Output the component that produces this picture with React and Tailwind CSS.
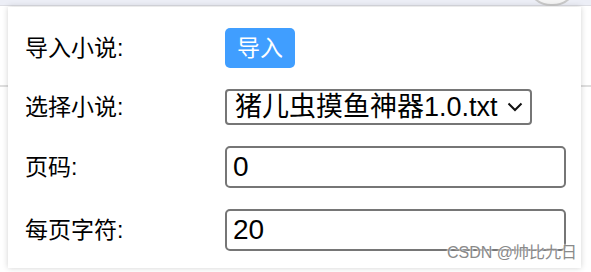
import React from 'react'

const font = { fontFamily: '"Liberation Sans", "Noto Sans CJK SC", sans-serif' }

function Row({ label, children }) {
  return (
    <div className="flex items-center">
      <div className="w-[200px] text-[23px] leading-[28px] text-black">{label}</div>
      {children}
    </div>
  )
}

export default function App() {
  return (
    <div className="relative w-[591px] h-[272px] bg-white overflow-hidden" style={font}>
      {/* browser chrome behind the popup */}
      <div className="h-[6px] bg-[#eceef6] border-b border-[#dcdde3]"></div>
      <div className="absolute left-0 right-0 top-[85px] h-[2px] bg-[#dedede]"></div>
      <div className="absolute left-[526px] top-[-44px] w-[52px] h-[50px] rounded-full bg-[#f4f4f4] border-2 border-[#c9c9c9]"></div>

      <div className="relative ml-[8px] mt-[1px] w-[573px] h-[261px] bg-white shadow-[0_0_6px_rgba(0,0,0,0.18)] pl-[17px] pt-[21px]">
        <div className="flex flex-col gap-[21px]">
          <Row label="导入小说:">
            <button className="w-[70px] h-[40px] rounded-[5px] bg-[#409eff] text-white text-[23px] leading-[28px]">导入</button>
          </Row>
          <Row label="选择小说:">
            <div className="relative w-[307px] h-[36px]">
              <select className="appearance-none w-full h-full border-2 border-[#767676] rounded-[4px] pl-[8px] text-[27px] leading-[30px] text-black bg-white outline-none" style={font}>
                <option>猪儿虫摸鱼神器1.0.txt</option>
              </select>
              <svg className="absolute right-[9px] top-[13px] pointer-events-none" width="16" height="10" viewBox="0 0 16 10">
                <path d="M1.5 1.5 L8 8 L14.5 1.5" fill="none" stroke="#111" strokeWidth="2" />
              </svg>
            </div>
          </Row>
          <Row label="页码:">
            <input defaultValue="0" className="w-[341px] h-[42px] border-2 border-[#767676] rounded-[5px] px-[6px] text-[28px] text-black outline-none" style={font} />
          </Row>
          <Row label="每页字符:">
            <input defaultValue="20" className="w-[341px] h-[42px] border-2 border-[#767676] rounded-[5px] px-[6px] text-[28px] text-black outline-none" style={font} />
          </Row>
        </div>
      </div>

      <div className="absolute right-[14px] top-[243px] text-[16px] leading-[20px] text-[#8a8a8a] [text-shadow:0_0_2px_#fff,0_0_2px_#fff]">
        CSDN @帅比九日
      </div>
    </div>
  )
}
